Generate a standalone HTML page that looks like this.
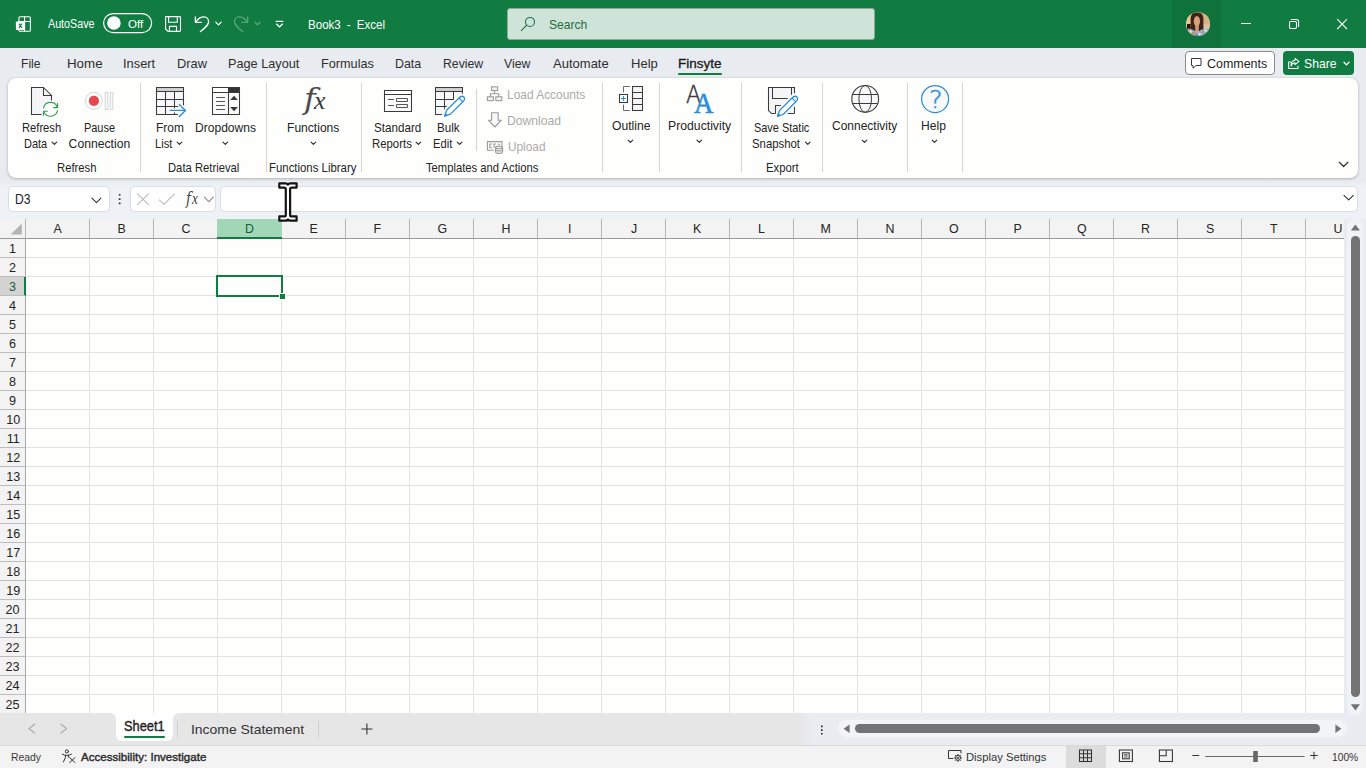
<!DOCTYPE html>
<html lang="en"><head><meta charset="utf-8"><title>Book3 - Excel</title>
<style>
html,body{margin:0;padding:0;}
body{width:1366px;height:768px;overflow:hidden;position:relative;background:#e8ecf0;font-family:"Liberation Sans",sans-serif;}
.t{position:absolute;white-space:pre;transform-origin:0 50%;}
.a{position:absolute;}
#titlebar{left:0;top:0;width:1366px;height:48px;background:#107c41;}
#acct{left:1172px;top:0;width:49px;height:48px;background:#0f723c;}
#search{left:507px;top:8px;width:366px;height:30px;background:#cfe4d8;border:1px solid #93a79b;border-radius:3px;}
#ribbon{left:8px;top:78px;width:1350px;height:100px;background:#fefefd;border-radius:8px;box-shadow:0 1px 3px rgba(0,0,0,.22),0 0 2px rgba(0,0,0,.10);}
.sep{position:absolute;width:1px;background:#d4d4d4;top:83px;height:89px;}
.sep.s{top:89px;height:62px;}
#fband{left:0;top:181px;width:1366px;height:38px;background:linear-gradient(to bottom,rgba(238,241,245,0),#eef1f5 5px);}
#comments{left:1185px;top:51px;width:88px;height:22px;background:#fff;border:1px solid #8a8a8a;border-radius:4px;}
#share{left:1283px;top:51px;width:71px;height:24px;background:#107c41;border-radius:4px;}
#tabul{left:678px;top:73px;width:44px;height:2px;background:#107c41;border-radius:1px;}
.box{position:absolute;top:186px;height:23.5px;background:#fefefe;border:1px solid #dadde2;border-radius:5px;}
#grid{left:0;top:219px;width:1344px;height:494px;background:#fefefd;overflow:hidden;}
#colhdr{left:0;top:0;width:1344px;height:19px;background:#f3f3f3;border-bottom:1px solid #9a9a9a;}
#rowhdr{left:0;top:20px;width:25px;height:475px;background:#f3f3f3;border-right:1px solid #a8a8a8;}
#cells{left:26px;top:20px;width:1319px;height:475px;
 background-image:linear-gradient(to right,transparent 63px,#e1e1e1 63px),linear-gradient(to bottom,transparent 18px,#e1e1e1 18px);
 background-size:64px 19px,64px 19px;}
.ch{position:absolute;top:0;height:19px;width:1px;background:#b5b5b5;}
.rh{position:absolute;left:0;width:25px;height:1px;background:#bdbdbd;}
#dhdr{left:217px;top:0;width:65px;height:18px;background:#a1d6b6;border-bottom:2px solid #107c41;}
#r3hdr{left:0;top:58px;width:24px;height:19px;background:#d3d3d3;border-right:2px solid #107c41;}
#sel{left:216px;top:56px;width:63px;height:18px;border:2px solid #107c41;}
#fill{left:279px;top:74px;width:5px;height:5px;background:#107c41;border:1px solid #fff;}
#tabbar{left:0;top:713px;width:1366px;height:32px;background:#e6e6e6;}
#tabW{left:108px;top:713px;width:73px;height:10px;background:#fefefe;}
#tabL{left:0;top:713px;width:116px;height:32px;background:#e6e6e6;border-top-right-radius:6px;}
#tabR{left:173px;top:713px;width:1193px;height:32px;background:linear-gradient(to right,#e6e6e6 625px,#e9edf1 640px);border-top-left-radius:6px;}
#sheet1{left:116px;top:713px;width:57px;height:28px;background:#fefefe;border-radius:0 0 6px 6px;}
#sheetul{left:124px;top:736px;width:41px;height:2px;background:#107c41;border-radius:1px;}
#hscroll{left:838px;top:720px;width:509px;height:17px;background:#f2f4f6;border-radius:8.5px;}
#hthumb{left:855px;top:724px;width:465px;height:9px;background:#737373;border-radius:4.5px;}
#vscroll{left:1347px;top:219px;width:16px;height:496px;background:#f0f3f6;border-radius:8px;}
#vthumb{left:1351px;top:236px;width:9px;height:461px;background:#737373;border-radius:4.5px;}
#status{left:0;top:745px;width:1366px;height:23px;background:#f3f3f3;border-top:1px solid #d8d8d8;box-sizing:border-box;}
#viewsel{left:1066px;top:746px;width:40px;height:22px;background:#dcdcdc;}
svg{position:absolute;left:0;top:0;overflow:visible;}
</style></head><body>
<div class="a" id="titlebar"></div><div class="a" id="acct"></div><div class="a" id="search"></div>
<div class="a" id="fband"></div><div class="a" id="ribbon"></div>
<div class="sep" style="left:140px"></div><div class="sep" style="left:266px"></div><div class="sep" style="left:361px"></div><div class="sep" style="left:602px"></div><div class="sep" style="left:659px"></div><div class="sep" style="left:741px"></div><div class="sep" style="left:822px"></div><div class="sep" style="left:907px"></div><div class="sep" style="left:962px"></div><div class="sep s" style="left:476px"></div>
<div class="a" id="comments"></div><div class="a" id="share"></div><div class="a" id="tabul"></div>
<div class="box" style="left:8px;width:100px"></div><div class="box" style="left:130px;width:84px"></div><div class="box" style="left:220px;width:1136px"></div>
<div class="a" id="grid"><div class="a" id="colhdr"></div><div class="a" id="rowhdr"></div><div class="a" id="cells"></div><div class="a" id="dhdr"></div><div class="a" id="r3hdr"></div><div class="ch" style="left:25px"></div><div class="ch" style="left:89px"></div><div class="ch" style="left:153px"></div><div class="ch" style="left:345px"></div><div class="ch" style="left:409px"></div><div class="ch" style="left:473px"></div><div class="ch" style="left:537px"></div><div class="ch" style="left:601px"></div><div class="ch" style="left:665px"></div><div class="ch" style="left:729px"></div><div class="ch" style="left:793px"></div><div class="ch" style="left:857px"></div><div class="ch" style="left:921px"></div><div class="ch" style="left:985px"></div><div class="ch" style="left:1049px"></div><div class="ch" style="left:1113px"></div><div class="ch" style="left:1177px"></div><div class="ch" style="left:1241px"></div><div class="ch" style="left:1305px"></div><div class="ch" style="left:1369px"></div><div class="rh" style="top:38px"></div><div class="rh" style="top:57px"></div><div class="rh" style="top:76px"></div><div class="rh" style="top:95px"></div><div class="rh" style="top:114px"></div><div class="rh" style="top:133px"></div><div class="rh" style="top:152px"></div><div class="rh" style="top:171px"></div><div class="rh" style="top:190px"></div><div class="rh" style="top:209px"></div><div class="rh" style="top:228px"></div><div class="rh" style="top:247px"></div><div class="rh" style="top:266px"></div><div class="rh" style="top:285px"></div><div class="rh" style="top:304px"></div><div class="rh" style="top:323px"></div><div class="rh" style="top:342px"></div><div class="rh" style="top:361px"></div><div class="rh" style="top:380px"></div><div class="rh" style="top:399px"></div><div class="rh" style="top:418px"></div><div class="rh" style="top:437px"></div><div class="rh" style="top:456px"></div><div class="rh" style="top:475px"></div><div class="rh" style="top:494px"></div><div class="a" id="sel"></div><div class="a" id="fill"></div></div>
<div class="a" id="tabbar"></div><div class="a" id="tabW"></div><div class="a" id="tabL"></div><div class="a" id="tabR"></div><div class="a" id="sheet1"></div><div class="a" id="sheetul"></div>
<div class="a" id="hscroll"></div><div class="a" id="hthumb"></div><div class="a" id="vscroll"></div><div class="a" id="vthumb"></div>
<div class="a" id="status"></div><div class="a" id="viewsel"></div>
<svg width="1366" height="768" viewBox="0 0 1366 768" fill="none">
<g stroke="#fff" stroke-width="1.2" stroke-linejoin="round" stroke-linecap="round">
<path d="M18.9,21.5 V17.9 Q18.9,16.8 20,16.8 H29.3 Q30.4,16.8 30.4,17.9 V30.2 Q30.4,31.3 29.3,31.3 H20 Q18.9,31.3 18.9,30.2 V30" stroke-width="1.1"/>
<path d="M24.6,16.8 V31.3 M18.9,21.5 H30.4" stroke-width="1.1"/>
<rect x="15.9" y="21.4" width="9.1" height="8.7" rx="0.8" fill="#fff" stroke="none"/>
<path d="M18.9,23.7 L21.9,27.9 M21.9,23.7 L18.9,27.9" stroke="#107c41" stroke-width="1.15" stroke-linecap="butt"/>
<rect x="103.6" y="13.6" width="48" height="19" rx="9.5"/>
<circle cx="113.9" cy="23" r="6.8" fill="#fff" stroke="none"/>
<path d="M166.2,16.6 H179.6 Q180.5,16.6 180.5,17.5 V30.5 Q180.5,31.4 179.6,31.4 H168 L165.6,29 V17.2 Q165.6,16.6 166.2,16.6 Z" stroke-width="1.1"/>
<path d="M168.6,16.6 V22.2 H177.3 V16.6 M169.4,31.4 V26.4 H176.5 V31.4" stroke-width="1.1"/>
<path d="M195.4,16.8 V22.3 H201.4" stroke-width="1.3"/>
<path d="M195.8,22 C198.2,18.4 201.2,16.8 204,16.8 C207,16.8 208.6,19.2 208.6,21.8 C208.6,25 206,27 200.4,31.6" stroke-width="1.3"/>
</g>
<path d="M215.80,22.15 L218.50,24.85 L221.20,22.15" stroke="#fff" stroke-width="1.3" stroke-linecap="round" stroke-linejoin="round"/>
<g stroke="#5aa47f" stroke-width="1.3" stroke-linejoin="round" stroke-linecap="round">
<path d="M247.7,16.8 V22.3 H241.7"/>
<path d="M247.3,22 C244.9,18.4 241.9,16.8 239.1,16.8 C236.1,16.8 234.5,19.2 234.5,21.8 C234.5,25 237.1,27 242.7,31.6"/>
</g>
<path d="M255.00,22.25 L257.50,24.75 L260.00,22.25" stroke="#5aa47f" stroke-width="1.3" stroke-linecap="round" stroke-linejoin="round"/>
<path d="M276.2,21.4 H282.8" stroke="#fff" stroke-width="1.4" stroke-linecap="round"/>
<path d="M276.50,24.10 L279.50,26.90 L282.50,24.10" stroke="#fff" stroke-width="1.3" stroke-linecap="round" stroke-linejoin="round"/>
<circle cx="530" cy="21.9" r="4.5" stroke="#1e6b43" stroke-width="1.05"/><path d="M526.7,25.2 L521.3,30.6" stroke="#1e6b43" stroke-width="1.05" stroke-linecap="round"/>
<defs><clipPath id="av"><circle cx="1198" cy="24" r="12"/></clipPath></defs>
<g clip-path="url(#av)"><rect x="1186" y="12" width="24" height="24" fill="#cfa877"/><rect x="1186" y="12" width="6" height="24" fill="#e6c98f"/><rect x="1202" y="14" width="8" height="10" fill="#d8b480"/><rect x="1203" y="24" width="7" height="8" fill="#d9c2a6"/><path d="M1190.6,31 V18 Q1191,12.6 1197,12.6 Q1203,12.6 1203.4,18 V31 Z" fill="#3b2317"/><rect x="1187" y="24" width="3.6" height="6" fill="#1f1410"/><ellipse cx="1196.9" cy="21.3" rx="3.1" ry="5.2" fill="#d9a07a"/><rect x="1195.2" y="25" width="3.6" height="6" fill="#d19873"/><path d="M1186,36 V29.6 Q1190,28 1193.4,30 L1197,33 L1200.6,30 Q1204,28 1210,29.6 V36 Z" fill="#8fb0d6"/><circle cx="1190.5" cy="31.5" r="1.3" fill="#e9e4d6"/><circle cx="1193.5" cy="33.4" r="1.3" fill="#d98a3a"/><circle cx="1199.5" cy="34" r="1.3" fill="#e9e4d6"/><circle cx="1203" cy="32" r="1.3" fill="#d98a3a"/><circle cx="1196.5" cy="35" r="1.2" fill="#5f7fae"/><circle cx="1205.5" cy="30.6" r="1.2" fill="#f0e9c9"/><circle cx="1188.6" cy="29.4" r="1.1" fill="#d98a3a"/></g>
<path d="M1241,23.5 H1251" stroke="#fff" stroke-width="1"/>
<rect x="1289.5" y="21.5" width="7" height="7" rx="1.2" stroke="#fff" stroke-width="1.05"/>
<path d="M1291.4,19.4 H1296.4 Q1298.6,19.4 1298.6,21.6 V26.6" stroke="#fff" stroke-width="1.05" stroke-linecap="round"/>
<path d="M1337.2,19.2 L1347,29 M1347,19.2 L1337.2,29" stroke="#fff" stroke-width="1.1"/>
<path d="M1191.5,58.5 H1201 V65.5 H1196.2 L1193,68.2 V65.5 H1191.5 Z" stroke="#3a3a3a" stroke-width="1" stroke-linejoin="miter"/>
<g stroke="#fff" stroke-width="1.05" stroke-linejoin="round" stroke-linecap="round"><path d="M1290.6,62 H1288.6 V68.4 H1298 V66"/><path d="M1295,58.4 L1299,61.4 L1295,64.6 V62.8 Q1292.4,62.8 1291,66 Q1291,60.4 1295,60.2 Z"/></g>
<path d="M1344.00,62.30 L1346.50,64.90 L1349.00,62.30" stroke="#fff" stroke-width="1.3" stroke-linecap="round" stroke-linejoin="round"/>
<path d="M31.5,87.5 H43.5 L51.5,95.5 V114.5 H31.5 Z" fill="#f5f5f8" stroke="none"/>
<circle cx="50.5" cy="109.3" r="9" fill="#fefefd" stroke="none"/>
<path d="M41.5,114.5 H31.5 V87.5 H43.5 L51.5,95.5 V100.5 M43.5,87.5 V95.5 H51.5" stroke="#3b3b3b" stroke-width="1.05" stroke-linejoin="miter"/>
<g stroke="#2ea052" stroke-width="1.1" stroke-linecap="butt" stroke-linejoin="miter"><path d="M43.4,108.4 A7.2,7.2 0 0 1 57.3,107.2"/><path d="M57.6,103 V107.6 H53.2"/><path d="M57.6,110.2 A7.2,7.2 0 0 1 43.7,111.4"/><path d="M43.4,115.8 V111.2 H47.8"/></g>
<circle cx="93.9" cy="100.9" r="8.5" stroke="#d4d6d9" stroke-width="1" fill="#fdfdfd"/><circle cx="93.9" cy="100.9" r="5.1" fill="#e8474d"/>
<rect x="105.2" y="92.6" width="2.6" height="16.8" stroke="#d4d6d9" stroke-width="1" fill="#fafafa"/><rect x="110.2" y="92.6" width="2.6" height="16.8" stroke="#d4d6d9" stroke-width="1" fill="#fafafa"/>
<g><rect x="156.5" y="87.5" width="27" height="27" fill="#f8f8fb" stroke="none"/>
<rect x="156.5" y="87.5" width="27" height="4" fill="#cfcfcf" stroke="none"/>
<path d="M156.5,87.5 H183.5 V114.5 H156.5 Z M156.5,91.5 H183.5 M156.5,99.5 H183.5 M156.5,106.5 H183.5 M165.5,91.5 V114.5 M174.5,91.5 V114.5" stroke="#3b3b3b" stroke-width="1.05" stroke-linejoin="miter"/></g>
<path d="M170.2,110.4 H185 M179.3,104.4 L185.5,110.4 L179.3,116.4" stroke="#fefefd" stroke-width="4.4" stroke-linecap="round" stroke-linejoin="round"/>
<path d="M170.2,110.4 H185 M179.3,104.4 L185.5,110.4 L179.3,116.4" stroke="#2b8fd9" stroke-width="1.4" stroke-linecap="round" stroke-linejoin="round"/>
<rect x="212.5" y="87.5" width="27" height="27" fill="#fafafb" stroke="none"/>
<rect x="212.5" y="87.5" width="16" height="5" fill="#fff" stroke="none"/>
<rect x="228.5" y="87.5" width="11" height="5" fill="#333" stroke="none"/>
<path d="M212.5,87.5 H239.5 V114.5 H212.5 Z M212.5,92.5 H239.5 M228.5,87.5 V114.5" stroke="#3b3b3b" stroke-width="1.05" stroke-linejoin="miter"/>
<path d="M216,97.5 H225 M216,101.5 H225 M216,105.5 H225 M216,109.5 H225" stroke="#555" stroke-width="1"/>
<path d="M230.1,99.9 L234,95.8 L237.9,99.9 Z M230.1,107.1 L234,111.2 L237.9,107.1 Z" fill="#383838" stroke="none"/>
<rect x="384.5" y="90.5" width="27" height="21" fill="#fafafb" stroke="none"/><rect x="384.5" y="90.5" width="27" height="4" fill="#fff" stroke="none"/>
<path d="M384.5,90.5 H411.5 V111.5 H384.5 Z M384.5,94.5 H411.5" stroke="#3b3b3b" stroke-width="1.05"/>
<path d="M388,99.5 H394 M388,105.5 H394 M396.5,98.5 H407.5 V101.5 H396.5 Z M396.5,104.5 H407.5 V107.5 H396.5 Z" stroke="#555" stroke-width="1"/>
<defs><clipPath id="cpb"><path d="M430,80 H476.5 L430,126.5 Z"/></clipPath></defs>
<g clip-path="url(#cpb)"><rect x="435.5" y="87.5" width="27" height="27" fill="#f8f8fb" stroke="none"/>
<rect x="435.5" y="87.5" width="27" height="4" fill="#cfcfcf" stroke="none"/>
<path d="M435.5,87.5 H462.5 V114.5 H435.5 Z M435.5,91.5 H462.5 M435.5,99.5 H462.5 M435.5,106.5 H462.5 M444.5,91.5 V114.5 M453.5,91.5 V114.5" stroke="#3b3b3b" stroke-width="1.05" stroke-linejoin="miter"/></g>
<path d="M444.60,116.20 L450.47,114.15 L464.91,99.71 L461.09,95.89 L446.65,110.33 Z" fill="#fefefd" stroke="#fefefd" stroke-width="5" stroke-linejoin="round"/>
<path d="M444.60,116.20 L450.47,114.15 L462.79,101.83 Q465.76,98.86 463.85,96.95 Q461.94,95.04 458.97,98.01 L446.65,110.33 Z" fill="#fefefd" stroke="#2b8fd9" stroke-width="1.3" stroke-linejoin="round"/>
<path d="M462.79,101.83 L458.97,98.01" stroke="#2b8fd9" stroke-width="1.1"/>
<path d="M444.60,116.20 L447.36,115.28 L445.52,113.44 Z" fill="#2b8fd9" stroke="#2b8fd9" stroke-width="0.8" stroke-linejoin="round"/>
<g stroke="#9a9a9a" stroke-width="1.1" fill="#f6f6f6"><rect x="491.6" y="86.8" width="6" height="3.8"/><rect x="487.4" y="96.8" width="6" height="3.8"/><rect x="495.8" y="96.8" width="6" height="3.8"/><path d="M494.6,90.6 V93.8 M490.4,96.8 V93.8 H498.8 V96.8" fill="none"/></g>
<path d="M491.6,112.8 H498.2 V120.2 H501.4 L494.9,127 L488.4,120.2 H491.6 Z" stroke="#9a9a9a" stroke-width="1.1" fill="#f8f8f8" stroke-linejoin="round"/>
<g stroke="#9a9a9a" stroke-width="1.1"><path d="M494,150.2 H487.4 V141.6 H502 V146"/><path d="M492,144 H489.8 V147.8 H492 M494,147.8 V144 H496.2 M498,144.2 H500"/><path d="M495.6,147.6 V152 Q495.6,153.4 499.1,153.4 Q502.6,153.4 502.6,152 V147.6" fill="#f4f4f4"/><ellipse cx="499.1" cy="147.4" rx="3.5" ry="1.3" fill="#f4f4f4"/><path d="M495.6,149.8 Q495.6,151 499.1,151 Q502.6,151 502.6,149.8"/></g>
<rect x="632.5" y="86.5" width="10" height="24" fill="#f5f5f8" stroke="#3b3b3b" stroke-width="1.05"/>
<path d="M632.5,92.5 H642.5 M632.5,98.5 H642.5 M632.5,104.5 H642.5" stroke="#3b3b3b" stroke-width="1"/>
<path d="M629.8,86.5 H623.5 V92.4 M623.5,104.6 V110.5 H629.8" stroke="#6a6a6a" stroke-width="1"/>
<rect x="619.5" y="94.5" width="8" height="8" fill="#fff" stroke="#3b3b3b" stroke-width="1.05"/>
<path d="M621,98.5 H626 M623.5,96 V101" stroke="#2b8fd9" stroke-width="1.1"/>
<path d="M768.5,87.5 H794.5 V113.5 H771.5 L768.5,110.5 Z" fill="#f5f5f8" stroke="none"/>
<path d="M794.5,113.5 V87.5 H768.5 V110.5 L771.5,113.5 H775.5 V105.5 H785 M786,113.5 H794.5 M772.5,87.5 V98.5 H789 M791.5,87.5 V97" stroke="#3b3b3b" stroke-width="1.05" stroke-linejoin="miter"/>
<path d="M777.50,116.30 L783.37,114.25 L797.91,99.71 L794.09,95.89 L779.55,110.43 Z" fill="#fefefd" stroke="#fefefd" stroke-width="5" stroke-linejoin="round"/>
<path d="M777.50,116.30 L783.37,114.25 L795.79,101.83 Q798.76,98.86 796.85,96.95 Q794.94,95.04 791.97,98.01 L779.55,110.43 Z" fill="#fefefd" stroke="#2b8fd9" stroke-width="1.3" stroke-linejoin="round"/>
<path d="M795.79,101.83 L791.97,98.01" stroke="#2b8fd9" stroke-width="1.1"/>
<path d="M777.50,116.30 L780.26,115.38 L778.42,113.54 Z" fill="#2b8fd9" stroke="#2b8fd9" stroke-width="0.8" stroke-linejoin="round"/>
<circle cx="865.2" cy="98.9" r="13.4" fill="#f8f8fa" stroke="#3b3b3b" stroke-width="1.1"/>
<ellipse cx="865.2" cy="98.9" rx="6.3" ry="13.4" stroke="#3b3b3b" stroke-width="1"/>
<path d="M852.6,94.5 H877.8 M852.6,103.5 H877.8" stroke="#3b3b3b" stroke-width="1"/>
<circle cx="935.1" cy="99.1" r="13.5" fill="#f8f9fb" stroke="#2b8fd9" stroke-width="1.25"/>
<path d="M52.10,142.15 L54.40,144.45 L56.70,142.15" stroke="#333" stroke-width="1.2" stroke-linecap="round" stroke-linejoin="round"/>
<path d="M177.20,142.15 L179.50,144.45 L181.80,142.15" stroke="#333" stroke-width="1.2" stroke-linecap="round" stroke-linejoin="round"/>
<path d="M223.00,142.15 L225.30,144.45 L227.60,142.15" stroke="#333" stroke-width="1.2" stroke-linecap="round" stroke-linejoin="round"/>
<path d="M311.10,142.15 L313.40,144.45 L315.70,142.15" stroke="#333" stroke-width="1.2" stroke-linecap="round" stroke-linejoin="round"/>
<path d="M416.10,142.15 L418.40,144.45 L420.70,142.15" stroke="#333" stroke-width="1.2" stroke-linecap="round" stroke-linejoin="round"/>
<path d="M457.30,142.15 L459.60,144.45 L461.90,142.15" stroke="#333" stroke-width="1.2" stroke-linecap="round" stroke-linejoin="round"/>
<path d="M628.10,140.05 L630.40,142.35 L632.70,140.05" stroke="#333" stroke-width="1.2" stroke-linecap="round" stroke-linejoin="round"/>
<path d="M697.00,140.05 L699.30,142.35 L701.60,140.05" stroke="#333" stroke-width="1.2" stroke-linecap="round" stroke-linejoin="round"/>
<path d="M805.50,142.15 L807.80,144.45 L810.10,142.15" stroke="#333" stroke-width="1.2" stroke-linecap="round" stroke-linejoin="round"/>
<path d="M862.20,140.05 L864.50,142.35 L866.80,140.05" stroke="#333" stroke-width="1.2" stroke-linecap="round" stroke-linejoin="round"/>
<path d="M932.20,140.05 L934.50,142.35 L936.80,140.05" stroke="#333" stroke-width="1.2" stroke-linecap="round" stroke-linejoin="round"/>
<path d="M1339.30,162.30 L1343.60,166.50 L1347.90,162.30" stroke="#333" stroke-width="1.2" stroke-linecap="round" stroke-linejoin="round"/>
<path d="M91.90,198.10 L96.40,202.70 L100.90,198.10" stroke="#333" stroke-width="1.1" stroke-linecap="round" stroke-linejoin="round"/>
<path d="M118.8,193.9 h1.7 v1.7 h-1.7 Z M118.8,198.2 h1.7 v1.7 h-1.7 Z M118.8,202.5 h1.7 v1.7 h-1.7 Z" fill="#333"/>
<path d="M137.2,193.6 L148.8,204.8 M148.8,193.6 L137.2,204.8" stroke="#bdbdbd" stroke-width="1.1"/>
<path d="M159,199.6 L163.8,204.4 L174.8,193.6" stroke="#bdbdbd" stroke-width="1.1"/>
<path d="M204.30,197.10 L208.80,201.70 L213.30,197.10" stroke="#8a8a8a" stroke-width="1.1" stroke-linecap="round" stroke-linejoin="round"/>
<path d="M1344.00,195.30 L1348.70,199.90 L1353.40,195.30" stroke="#333" stroke-width="1.1" stroke-linecap="round" stroke-linejoin="round"/>
<path d="M279.3,183.3 H285.6 Q287.2,183.3 287.95,184.6 Q288.7,183.3 290.3,183.3 H296.6 V187.6 H291.6 Q290.1,187.6 290.1,189.1 V214.9 Q290.1,216.4 291.6,216.4 H296.6 V220.7 H290.3 Q288.7,220.7 287.95,219.4 Q287.2,220.7 285.6,220.7 H279.3 V216.4 H284.3 Q285.8,216.4 285.8,214.9 V189.1 Q285.8,187.6 284.3,187.6 H279.3 Z" fill="#fff" stroke="#141414" stroke-width="2.2" stroke-linejoin="round"/>
<path d="M10.6,234.6 H21.8 V223.6 Z" fill="#b4b4b4"/>
<path d="M34.6,724.2 L29,728.6 L34.6,733" stroke="#a8a8a8" stroke-width="1.2" stroke-linecap="round" stroke-linejoin="round"/>
<path d="M61,724.2 L66.6,728.6 L61,733" stroke="#a8a8a8" stroke-width="1.2" stroke-linecap="round" stroke-linejoin="round"/>
<path d="M177.5,720.5 V737 M318.5,720.5 V737" stroke="#cfcfcf" stroke-width="1"/>
<path d="M361.4,729 H372.4 M366.9,723.5 V734.5" stroke="#333" stroke-width="1.1"/>
<path d="M821,725.6 h1.6 v1.6 h-1.6 Z M821,729.3 h1.6 v1.6 h-1.6 Z M821,733 h1.6 v1.6 h-1.6 Z" fill="#222"/>
<path d="M849.6,724.6 V733 L843.6,728.8 Z M1335.4,724.6 V733 L1341.4,728.8 Z" fill="#737373"/>
<path d="M1350.8,230.4 H1360 L1355.4,224.4 Z M1350.8,704.2 H1360 L1355.4,710.4 Z" fill="#737373"/>
<g stroke="#333" stroke-width="1" stroke-linecap="round" stroke-linejoin="round"><circle cx="66.9" cy="751.4" r="1.6"/><path d="M62.4,754.2 Q64.6,755.4 66.9,755.4 Q69.2,755.4 71.4,754.2 M65.4,755.4 V757.6 L63.4,762 M68.4,755.4 V757.2"/><path d="M69.6,757.6 L75,762.6 M75,757.6 L69.6,762.6"/></g>
<g stroke="#333" stroke-width="1"><path d="M953.4,758.5 H948.5 V750.5 H961 V753.4"/><circle cx="958" cy="757.9" r="2.5" fill="#f3f3f3"/><circle cx="958" cy="757.9" r="0.8"/><path d="M958,754 V755.4 M958,760.4 V761.8 M954.1,757.9 H955.5 M960.5,757.9 H961.9 M955.2,755.1 L956.2,756.1 M959.8,759.7 L960.8,760.7 M955.2,760.7 L956.2,759.7 M959.8,756.1 L960.8,755.1"/></g>
<g stroke="#333" stroke-width="1.05"><rect x="1079.5" y="750" width="12" height="11.5"/><path d="M1083.5,750 V761.5 M1087.5,750 V761.5 M1079.5,753.8 H1091.5 M1079.5,757.7 H1091.5"/><rect x="1119.4" y="750" width="13" height="11.5"/><rect x="1122.6" y="752.8" width="6.6" height="6"/><path d="M1124.2,754.5 H1127.6 M1124.2,755.8 H1127.6 M1124.2,757.1 H1127.6" stroke-width="0.7"/><rect x="1159.4" y="750" width="13" height="11.5"/><path d="M1166.2,750 V755.8 H1159.4"/></g>
<path d="M1192.4,755.5 H1199.2 M1310.2,755.5 H1317.8 M1314,751.7 V759.3" stroke="#333" stroke-width="1"/>
<path d="M1205.2,756.5 H1304.6" stroke="#6a6a6a" stroke-width="1"/>
<rect x="1253.2" y="751" width="4.6" height="11" fill="#666"/>
</svg>
<span class="t" id="t0" style="left:48.30px;top:14px;font-size:12px;line-height:20px;color:#ffffff;transform:scaleX(0.8938);">AutoSave</span>
<span class="t" id="t1" style="left:127.60px;top:14px;font-size:11.5px;line-height:20px;color:#ffffff;transform:scaleX(1.0042);">Off</span>
<span class="t" id="t2" style="left:308.46px;top:15px;font-size:12.3px;line-height:20px;color:#ffffff;word-spacing:3px;transform:scaleX(0.9409);">Book3 - Excel</span>
<span class="t" id="t3" style="left:549.30px;top:15px;font-size:13px;line-height:20px;color:#1d6a41;transform:scaleX(0.9302);">Search</span>
<span class="t" id="t4" style="left:21.38px;top:54px;font-size:13.2px;line-height:20px;color:#2e2e2e;transform:scaleX(0.9189);">File</span>
<span class="t" id="t5" style="left:67.19px;top:54px;font-size:13.2px;line-height:20px;color:#2e2e2e;transform:scaleX(1.0105);">Home</span>
<span class="t" id="t6" style="left:123.33px;top:54px;font-size:13.2px;line-height:20px;color:#2e2e2e;transform:scaleX(0.9747);">Insert</span>
<span class="t" id="t7" style="left:176.52px;top:54px;font-size:13.2px;line-height:20px;color:#2e2e2e;transform:scaleX(0.9752);">Draw</span>
<span class="t" id="t8" style="left:228.24px;top:54px;font-size:13.2px;line-height:20px;color:#2e2e2e;transform:scaleX(0.9633);">Page Layout</span>
<span class="t" id="t9" style="left:321.14px;top:54px;font-size:13.2px;line-height:20px;color:#2e2e2e;transform:scaleX(0.9620);">Formulas</span>
<span class="t" id="t10" style="left:395.46px;top:54px;font-size:13.2px;line-height:20px;color:#2e2e2e;transform:scaleX(0.9411);">Data</span>
<span class="t" id="t11" style="left:443.37px;top:54px;font-size:13.2px;line-height:20px;color:#2e2e2e;transform:scaleX(0.9294);">Review</span>
<span class="t" id="t12" style="left:504.00px;top:54px;font-size:13.2px;line-height:20px;color:#2e2e2e;transform:scaleX(0.9299);">View</span>
<span class="t" id="t13" style="left:553.00px;top:54px;font-size:13.2px;line-height:20px;color:#2e2e2e;transform:scaleX(0.9873);">Automate</span>
<span class="t" id="t14" style="left:630.51px;top:54px;font-size:13.2px;line-height:20px;color:#2e2e2e;transform:scaleX(0.9888);">Help</span>
<span class="t" id="t15" style="left:677.91px;top:54px;font-size:13.6px;line-height:20px;color:#1a1a1a;-webkit-text-stroke:0.3px #1a1a1a;transform:scaleX(0.9940);">Finsyte</span>
<span class="t" id="t16" style="left:1206.70px;top:54px;font-size:13.2px;line-height:20px;color:#242424;transform:scaleX(0.9445);">Comments</span>
<span class="t" id="t17" style="left:1304.40px;top:54px;font-size:13.2px;line-height:20px;color:#ffffff;transform:scaleX(0.9238);">Share</span>
<span class="t" id="t18" style="left:21.68px;top:118px;font-size:12.2px;line-height:20px;color:#242424;transform:scaleX(0.9170);">Refresh</span>
<span class="t" id="t19" style="left:23.70px;top:134px;font-size:12.2px;line-height:20px;color:#242424;transform:scaleX(0.9012);">Data</span>
<span class="t" id="t20" style="left:83.60px;top:118px;font-size:12.2px;line-height:20px;color:#242424;transform:scaleX(0.8970);">Pause</span>
<span class="t" id="t21" style="left:68.60px;top:134px;font-size:12.2px;line-height:20px;color:#242424;">Connection</span>
<span class="t" id="t22" style="left:155.52px;top:118px;font-size:12.2px;line-height:20px;color:#242424;transform:scaleX(0.9787);">From</span>
<span class="t" id="t23" style="left:154.69px;top:134px;font-size:12.2px;line-height:20px;color:#242424;transform:scaleX(0.9150);">List</span>
<span class="t" id="t24" style="left:194.61px;top:118px;font-size:12.2px;line-height:20px;color:#242424;transform:scaleX(0.9892);">Dropdowns</span>
<span class="t" id="t25" style="left:287.41px;top:118px;font-size:12.2px;line-height:20px;color:#242424;transform:scaleX(0.9914);">Functions</span>
<span class="t" id="t26" style="left:374.00px;top:118px;font-size:12.2px;line-height:20px;color:#242424;transform:scaleX(0.9551);">Standard</span>
<span class="t" id="t27" style="left:371.67px;top:134px;font-size:12.2px;line-height:20px;color:#242424;transform:scaleX(0.9331);">Reports</span>
<span class="t" id="t28" style="left:436.55px;top:118px;font-size:12.2px;line-height:20px;color:#242424;transform:scaleX(0.9528);">Bulk</span>
<span class="t" id="t29" style="left:432.88px;top:134px;font-size:12.2px;line-height:20px;color:#242424;transform:scaleX(0.9168);">Edit</span>
<span class="t" id="t30" style="left:506.82px;top:85px;font-size:12.2px;line-height:20px;color:#ababab;transform:scaleX(0.9782);">Load Accounts</span>
<span class="t" id="t31" style="left:506.80px;top:111px;font-size:12.2px;line-height:20px;color:#ababab;transform:scaleX(0.9977);">Download</span>
<span class="t" id="t32" style="left:507.80px;top:137px;font-size:12.2px;line-height:20px;color:#ababab;transform:scaleX(0.9698);">Upload</span>
<span class="t" id="t33" style="left:611.50px;top:116px;font-size:12.2px;line-height:20px;color:#242424;transform:scaleX(0.9939);">Outline</span>
<span class="t" id="t34" style="left:667.70px;top:116px;font-size:12.2px;line-height:20px;color:#242424;transform:scaleX(1.0032);">Productivity</span>
<span class="t" id="t35" style="left:754.30px;top:118px;font-size:12.2px;line-height:20px;color:#242424;transform:scaleX(0.8968);">Save Static</span>
<span class="t" id="t36" style="left:752.20px;top:134px;font-size:12.2px;line-height:20px;color:#242424;transform:scaleX(0.9326);">Snapshot</span>
<span class="t" id="t37" style="left:831.50px;top:116px;font-size:12.2px;line-height:20px;color:#242424;transform:scaleX(0.9838);">Connectivity</span>
<span class="t" id="t38" style="left:921.41px;top:116px;font-size:12.2px;line-height:20px;color:#242424;transform:scaleX(0.9923);">Help</span>
<span class="t" id="t39" style="left:56.58px;top:158px;font-size:12.2px;line-height:20px;color:#242424;transform:scaleX(0.9243);">Refresh</span>
<span class="t" id="t40" style="left:167.68px;top:158px;font-size:12.2px;line-height:20px;color:#242424;transform:scaleX(0.9230);">Data Retrieval</span>
<span class="t" id="t41" style="left:269.47px;top:158px;font-size:12.2px;line-height:20px;color:#242424;transform:scaleX(0.9349);">Functions Library</span>
<span class="t" id="t42" style="left:425.50px;top:158px;font-size:12.2px;line-height:20px;color:#242424;transform:scaleX(0.9215);">Templates and Actions</span>
<span class="t" id="t43" style="left:765.68px;top:158px;font-size:12.2px;line-height:20px;color:#242424;transform:scaleX(0.9243);">Export</span>
<span class="t" id="t44" style="left:303.78px;top:89px;font-size:29.5px;line-height:20px;color:#4d4d4d;font-family:'DejaVu Serif', serif;font-style:italic;transform:scaleX(1.0889);">f</span><span class="t" id="t45" style="left:313.89px;top:91px;font-size:26px;line-height:20px;color:#3a3a3a;font-family:'Liberation Serif', serif;font-style:italic;transform:scaleX(0.9923);">x</span>
<span class="t" id="t46" style="left:686.00px;top:85px;font-size:24.2px;line-height:20px;color:#3a3a3a;font-weight:200;font-family:'DejaVu Sans', sans-serif;-webkit-text-stroke:0.55px #3a3a3a;transform:scaleX(0.9062);">A</span>
<span class="t" id="t47" style="left:694.20px;top:93px;font-size:30px;line-height:20px;color:#2b8fd9;font-family:'Liberation Serif', serif;-webkit-text-stroke:0.7px #2b8fd9;transform:scaleX(0.8955);">A</span>
<span class="t" id="t48" style="left:928.96px;top:90px;font-size:24.6px;line-height:20px;color:#2b8fd9;font-weight:200;font-family:'DejaVu Sans', sans-serif;-webkit-text-stroke:0.5px #2b8fd9;transform:scaleX(1.0400);">?</span>
<span class="t" id="t49" style="left:14.77px;top:189px;font-size:14.6px;line-height:20px;color:#242424;transform:scaleX(0.8324);">D3</span>
<span class="t" id="t50" style="left:186.32px;top:189px;font-size:16.6px;line-height:20px;color:#444;font-family:'DejaVu Serif', serif;font-style:italic;transform:scaleX(0.8091);">f</span><span class="t" id="t51" style="left:191.67px;top:189px;font-size:17px;line-height:20px;color:#333;font-family:'Liberation Serif', serif;font-style:italic;transform:scaleX(0.7667);">x</span>
<span class="t" id="t52" style="left:53.50px;top:219px;font-size:12.4px;line-height:20px;color:#242424;">A</span>
<span class="t" id="t53" style="left:117.50px;top:219px;font-size:12.4px;line-height:20px;color:#242424;">B</span>
<span class="t" id="t54" style="left:181.50px;top:219px;font-size:12.4px;line-height:20px;color:#242424;">C</span>
<span class="t" id="t55" style="left:245.00px;top:219px;font-size:12.4px;line-height:20px;color:#185c37;">D</span>
<span class="t" id="t56" style="left:309.50px;top:219px;font-size:12.4px;line-height:20px;color:#242424;">E</span>
<span class="t" id="t57" style="left:373.50px;top:219px;font-size:12.4px;line-height:20px;color:#242424;">F</span>
<span class="t" id="t58" style="left:437.50px;top:219px;font-size:12.4px;line-height:20px;color:#242424;">G</span>
<span class="t" id="t59" style="left:501.50px;top:219px;font-size:12.4px;line-height:20px;color:#242424;">H</span>
<span class="t" id="t60" style="left:568.00px;top:219px;font-size:12.4px;line-height:20px;color:#242424;">I</span>
<span class="t" id="t61" style="left:631.00px;top:219px;font-size:12.4px;line-height:20px;color:#242424;">J</span>
<span class="t" id="t62" style="left:693.00px;top:219px;font-size:12.4px;line-height:20px;color:#242424;">K</span>
<span class="t" id="t63" style="left:758.00px;top:219px;font-size:12.4px;line-height:20px;color:#242424;">L</span>
<span class="t" id="t64" style="left:820.50px;top:219px;font-size:12.4px;line-height:20px;color:#242424;">M</span>
<span class="t" id="t65" style="left:885.50px;top:219px;font-size:12.4px;line-height:20px;color:#242424;">N</span>
<span class="t" id="t66" style="left:949.00px;top:219px;font-size:12.4px;line-height:20px;color:#242424;">O</span>
<span class="t" id="t67" style="left:1013.50px;top:219px;font-size:12.4px;line-height:20px;color:#242424;">P</span>
<span class="t" id="t68" style="left:1077.00px;top:219px;font-size:12.4px;line-height:20px;color:#242424;">Q</span>
<span class="t" id="t69" style="left:1141.00px;top:219px;font-size:12.4px;line-height:20px;color:#242424;">R</span>
<span class="t" id="t70" style="left:1206.00px;top:219px;font-size:12.4px;line-height:20px;color:#242424;">S</span>
<span class="t" id="t71" style="left:1270.00px;top:219px;font-size:12.4px;line-height:20px;color:#242424;">T</span>
<span class="t" id="t72" style="left:1333.50px;top:219px;font-size:12.4px;line-height:20px;color:#242424;">U</span>
<span class="t" id="t73" style="left:9.10px;top:239px;font-size:12.6px;line-height:20px;color:#242424;">1</span>
<span class="t" id="t74" style="left:9.10px;top:258px;font-size:12.6px;line-height:20px;color:#242424;">2</span>
<span class="t" id="t75" style="left:9.10px;top:277px;font-size:12.6px;line-height:20px;color:#185c37;">3</span>
<span class="t" id="t76" style="left:9.10px;top:296px;font-size:12.6px;line-height:20px;color:#242424;">4</span>
<span class="t" id="t77" style="left:9.10px;top:315px;font-size:12.6px;line-height:20px;color:#242424;">5</span>
<span class="t" id="t78" style="left:9.10px;top:334px;font-size:12.6px;line-height:20px;color:#242424;">6</span>
<span class="t" id="t79" style="left:9.10px;top:353px;font-size:12.6px;line-height:20px;color:#242424;">7</span>
<span class="t" id="t80" style="left:9.10px;top:372px;font-size:12.6px;line-height:20px;color:#242424;">8</span>
<span class="t" id="t81" style="left:9.10px;top:391px;font-size:12.6px;line-height:20px;color:#242424;">9</span>
<span class="t" id="t82" style="left:6.30px;top:410px;font-size:12.6px;line-height:20px;color:#242424;">10</span>
<span class="t" id="t83" style="left:6.77px;top:429px;font-size:12.6px;line-height:20px;color:#242424;">11</span>
<span class="t" id="t84" style="left:6.30px;top:448px;font-size:12.6px;line-height:20px;color:#242424;">12</span>
<span class="t" id="t85" style="left:6.30px;top:467px;font-size:12.6px;line-height:20px;color:#242424;">13</span>
<span class="t" id="t86" style="left:6.30px;top:486px;font-size:12.6px;line-height:20px;color:#242424;">14</span>
<span class="t" id="t87" style="left:6.30px;top:505px;font-size:12.6px;line-height:20px;color:#242424;">15</span>
<span class="t" id="t88" style="left:6.30px;top:524px;font-size:12.6px;line-height:20px;color:#242424;">16</span>
<span class="t" id="t89" style="left:6.30px;top:543px;font-size:12.6px;line-height:20px;color:#242424;">17</span>
<span class="t" id="t90" style="left:6.30px;top:562px;font-size:12.6px;line-height:20px;color:#242424;">18</span>
<span class="t" id="t91" style="left:6.30px;top:581px;font-size:12.6px;line-height:20px;color:#242424;">19</span>
<span class="t" id="t92" style="left:5.60px;top:600px;font-size:12.6px;line-height:20px;color:#242424;">20</span>
<span class="t" id="t93" style="left:5.60px;top:619px;font-size:12.6px;line-height:20px;color:#242424;">21</span>
<span class="t" id="t94" style="left:5.60px;top:638px;font-size:12.6px;line-height:20px;color:#242424;">22</span>
<span class="t" id="t95" style="left:5.60px;top:657px;font-size:12.6px;line-height:20px;color:#242424;">23</span>
<span class="t" id="t96" style="left:5.60px;top:676px;font-size:12.6px;line-height:20px;color:#242424;">24</span>
<span class="t" id="t97" style="left:5.60px;top:695px;font-size:12.6px;line-height:20px;color:#242424;">25</span>
<span class="t" id="t98" style="left:124.20px;top:716px;font-size:14.2px;line-height:20px;color:#1f1f1f;-webkit-text-stroke:0.4px #1f1f1f;transform:scaleX(0.9029);">Sheet1</span>
<span class="t" id="t99" style="left:191.45px;top:720px;font-size:13.3px;line-height:20px;color:#333;transform:scaleX(1.0474);">Income Statement</span>
<span class="t" id="t100" style="left:11.40px;top:747px;font-size:11.3px;line-height:20px;color:#3a3a3a;transform:scaleX(0.9210);">Ready</span>
<span class="t" id="t101" style="left:80.50px;top:747px;font-size:11.3px;line-height:20px;color:#2a2a2a;-webkit-text-stroke:0.4px #2a2a2a;transform:scaleX(1.0241);">Accessibility: Investigate</span>
<span class="t" id="t102" style="left:965.60px;top:747px;font-size:11.3px;line-height:20px;color:#333;transform:scaleX(0.9932);">Display Settings</span>
<span class="t" id="t103" style="left:1331.70px;top:747px;font-size:11.3px;line-height:20px;color:#333;transform:scaleX(0.9082);">100%</span>
</body></html>
